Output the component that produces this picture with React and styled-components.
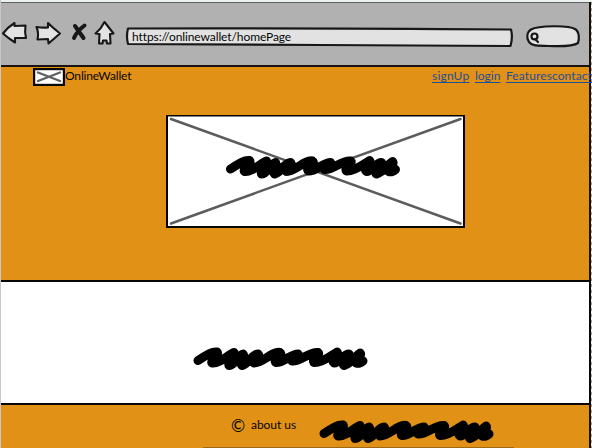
import React from "react";
import styled, { createGlobalStyle } from "styled-components";

const GlobalStyle = createGlobalStyle`
  * { box-sizing: border-box; }
  body { margin: 0; overflow: hidden; background: #eef1f2; }
`;

const Window = styled.div`
  display: flex;
  width: 592px;
  height: 448px;
  padding-top: 2px;
  border-left: 1px solid #c8c8c8;
  overflow: hidden;
  font-family: Lato, "Open Sans", sans-serif;
  font-size: 12px;
  color: #050505;
`;

const Page = styled.div`
  display: flex;
  flex-direction: column;
  flex: none;
  width: 588px;
`;

const Edge = styled.div`
  flex: none;
  width: 3px;
  border-left: 2px solid #14110c;
  background: repeating-linear-gradient(#a8a098 0 3px, #f4f2ee 3px 6px);
`;

const Toolbar = styled.header`
  display: flex;
  align-items: flex-start;
  height: 65px;
  border-top: 1px solid #606060;
  border-bottom: 2px solid #171313;
  background: #b1b1b1;
`;

const ToolIcons = styled.svg`
  flex: none;
  width: 124px;
  height: 61px;
  fill: #e3e3e3;
  stroke: #171717;
  stroke-width: 2.1;
  stroke-linejoin: round;
  stroke-linecap: round;
`;

const Address = styled.div`
  display: grid;
  flex: none;
  width: 392px;
  height: 61px;
  & > * { grid-area: 1 / 1; }
`;

const FieldOutline = styled.svg`
  width: 100%;
  height: 61px;
  fill: #e2e2e2;
  stroke: #171717;
  stroke-width: 2.2;
  stroke-linejoin: round;
  stroke-linecap: round;
`;

const Url = styled.span`
  padding: 26px 0 0 7px;
  line-height: 16px;
  letter-spacing: ${(p) => p.$tracking}px;
`;

const Search = styled(FieldOutline)`
  flex: none;
  width: 70px;
`;

const Hero = styled.main`
  display: flex;
  flex-direction: column;
  height: 213px;
  background: #e29117;
`;

const Nav = styled.nav`
  display: flex;
  height: 48px;
  padding: 1px 0 0 32px;
  line-height: 16px;
`;

const Logo = styled.svg`
  flex: none;
  width: 32px;
  height: 18px;
`;

const Brand = styled.span`
  width: 367px;
  letter-spacing: ${(p) => p.$tracking}px;
`;

const NavLink = styled.a`
  flex: none;
  width: ${(p) => p.$width}px;
  white-space: nowrap;
  color: #1f4f96;
  letter-spacing: ${(p) => p.$tracking || 0}px;
  text-decoration: underline;
  text-decoration-thickness: 1px;
  text-underline-offset: 2px;
  position: relative;
  z-index: 1;
`;

const Placeholder = styled.svg`
  flex: none;
  width: 300px;
  height: 115px;
  margin-left: 165px;
`;

const Content = styled.section`
  flex: none;
  width: 590px;
  height: 125px;
  padding: 54px 0 0 184px;
  border: solid #080808;
  border-width: 2px 2px 2px 0;
  background: #fff;
  position: relative;
  z-index: 1;
`;

const Footer = styled.footer`
  display: flex;
  height: 43px;
  padding-left: 230px;
  background:
    linear-gradient(#a06812, #a06812) 202px 100% / 311px 1px no-repeat,
    #e29117;
`;

const Copyright = styled.span`
  width: 20px;
  padding-top: 10px;
  font-size: 17px;
  line-height: 22px;
`;

const About = styled.span`
  width: 60px;
  padding-top: 12px;
  line-height: 16px;
  letter-spacing: ${(p) => p.$tracking}px;
`;

const Scrawl = styled.svg`
  flex: none;
  display: block;
  width: 190px;
  height: 43px;
`;

const SCRIBBLE =
  "M13 24.5C20 20 27 15 32 16C35 19 25 24 27 27C34 28 43 19 49 16.500C51 20 42 26 44 29.500C50 29 52 21 58 18C61 21 54 27 57 29.500C64 28 67 18 73 18C76 21 66 24 69 27C78 27 87 15 95 16.500C99 19 87 24 91 26.500C98 27 106 18 113 18C116 21 104 22 107 25C115 26 125 15 133 16.500C136 19 126 23 129 26.500C137 27 147 19 152 16C155 19 145 24 149 27C155 27 158 18 164 18C167 22 156 27 159 29.500C166 28 170 20 175 17C178 20 169 24 171 27C174 28 177 26 178 25M46 26L72 22M150 24L175 22";

function ScribblePath() {
  return (
    <path
      d={SCRIBBLE}
      fill="none"
      stroke="#000"
      strokeWidth="9"
      strokeLinejoin="round"
      strokeLinecap="round"
    />
  );
}

export default function App() {
  return (
    <Window>
      <GlobalStyle />
      <Page>
        <Toolbar>
          <ToolIcons viewBox="1 3 124 61">
            <path d="M3 33.500Q8 27 14.500 23L14.500 26L25.500 25.500Q24.500 32 26 38L15 38L15 42.500Q8 38 3 33.500Z" />
            <path d="M36.500 27Q42 28 48 27.500L48 23Q53 28 60 33.500L48.500 43.500L48 39L37.500 39.500Q39 33 36.500 27Z" />
            <path d="M75 26L83.500 38M84.500 25.500Q77 31 74 38" strokeWidth="4" />
            <path d="M104.500 22L113.500 33.500L110 34L110.500 43.500L107 43.500L106.500 40.500L103 40.500L102.500 43.500L99 43.500L99.500 34L95.500 33.500Q101 29 104.500 22Z" />
          </ToolIcons>
          <Address>
            <FieldOutline viewBox="125 3 392 61">
              <path d="M128 28.500Q300 28 511 29.500Q513 37 510.500 46L320 45L128 44Q126 36 128 28.500Z" />
            </FieldOutline>
            <Url $tracking={-0.1}>https://onlinewallet/homePage</Url>
          </Address>
          <Search viewBox="517 3 70 61">
            <path d="M531 29.500C538 25.500 569 25 575 29C580 32 579 40 578 43C573 46.500 560 46.500 549 46C537 45.500 532 46 529 42C526 38 527 32 531 29.500Z" />
            <circle cx="534.500" cy="36.500" r="3" />
            <path d="M535 39L538 42" />
          </Search>
        </Toolbar>
        <Hero>
          <Nav>
            <Logo viewBox="33 68 32 18">
              <rect x="34" y="69" width="30" height="16" fill="#fff" stroke="#080808" strokeWidth="2.4" />
              <path d="M38 72.500L60 81M60 72.500L38 81" stroke="#606060" strokeWidth="2.4" strokeLinecap="round" />
            </Logo>
            <Brand $tracking={-0.15}>OnlineWallet</Brand>
            <NavLink $width={43} $tracking={0.2}>signUp</NavLink>
            <NavLink $width={31}>login</NavLink>
            <NavLink $width={82} $tracking={0.1}>Featurescontact</NavLink>
          </Nav>
          <Placeholder viewBox="166 115 300 115">
            <rect x="167" y="115.500" width="297" height="111.500" fill="#fff" stroke="#050505" strokeWidth="2" />
            <path d="M171 119L460.500 223.500M460.500 119L171 223.500" stroke="#5c5c5c" strokeWidth="2.500" strokeLinecap="round" />
            <g transform="translate(217.500 144.500)">
              <ScribblePath />
            </g>
          </Placeholder>
        </Hero>
        <Content>
          <Scrawl viewBox="0 0 190 43">
            <ScribblePath />
          </Scrawl>
        </Content>
        <Footer>
          <Copyright>©</Copyright>
          <About $tracking={-0.05}>about us</About>
          <Scrawl viewBox="0 -4 190 43">
            <ScribblePath />
          </Scrawl>
        </Footer>
      </Page>
      <Edge />
    </Window>
  );
}
